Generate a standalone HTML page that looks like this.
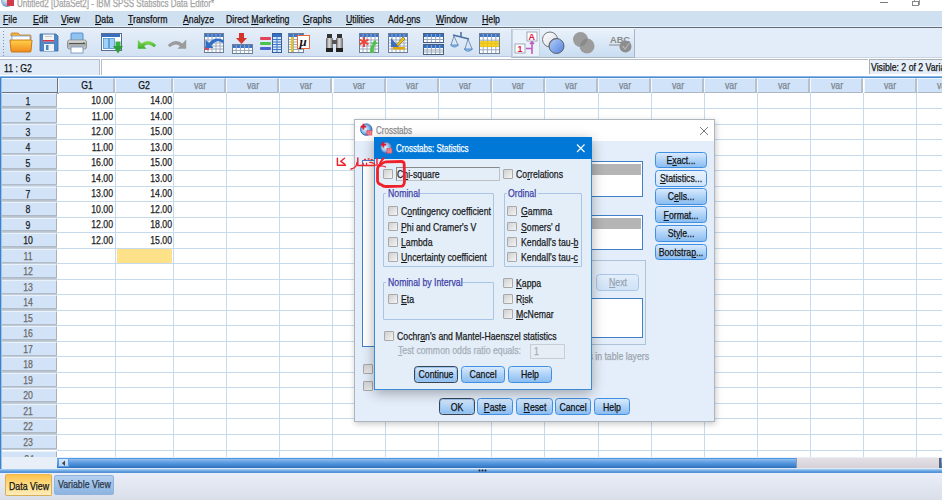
<!DOCTYPE html><html><head><meta charset="utf-8"><style>
*{margin:0;padding:0;box-sizing:border-box}
html,body{width:942px;height:500px;overflow:hidden;background:#fff;font-family:"Liberation Sans", sans-serif;font-size:11px;color:#1a1a1a}
.a{position:absolute}
.t{position:absolute;white-space:nowrap;line-height:1;-webkit-text-stroke:0.25px currentColor}
.u{text-decoration:underline;text-underline-offset:1px}
.btn{position:absolute;border:1px solid #3f8fe2;border-radius:3.5px;background:linear-gradient(#d9eafc,#b3d5f8 45%,#8bbdf1)}
.cb{position:absolute;width:9.8px;height:9.8px;margin:-0.8px 0 0 -0.8px;border:1px solid #a9a9a9;border-radius:1px;background:linear-gradient(135deg,#d0d0d0,#f4f4f4)}
.grp{position:absolute;border:1px solid #a9c4e4;border-radius:1px}
</style></head><body>

<div class="a" style="left:0;top:0;width:942px;height:11px;background:#fff"></div>
<div class="a" style="left:1px;top:-5px;width:12px;height:12px;border-radius:50%;background:radial-gradient(circle at 40% 40%,#e6f0fa,#3c6fb0)"></div>
<div class="a" style="left:7px;top:0px;width:7px;height:6px;background:#d23b4c"></div>
<div class="t" style="left:17.00px;top:-2.06px;font-size:10.5px;color:#a3a3a3;transform:scaleX(0.766);transform-origin:0 0;">Untitled2 [DataSet2] - IBM SPSS Statistics Data Editor*</div>
<div class="a" style="left:880px;top:2px;width:8px;height:1px;background:#7a7a7a"></div>
<div class="a" style="left:913.5px;top:-1px;width:6.5px;height:5.5px;border:1px solid #999"></div>
<div class="a" style="left:912px;top:0.5px;width:6.5px;height:5.5px;border:1px solid #888;background:#fff"></div>
<div class="a" style="left:0;top:11px;width:942px;height:16px;background:#cfe0f1"></div>
<div class="a" style="left:0;top:26px;width:942px;height:1px;background:#e6f2fb"></div>
<div class="a" style="left:0;top:27px;width:942px;height:1px;background:#5f6a76"></div>
<div class="t" style="left:3.30px;top:14.24px;font-size:10.5px;color:#111;transform:scaleX(0.83);transform-origin:0 0;"><span class="u">F</span>ile</div>
<div class="t" style="left:32.60px;top:14.24px;font-size:10.5px;color:#111;transform:scaleX(0.83);transform-origin:0 0;"><span class="u">E</span>dit</div>
<div class="t" style="left:61.00px;top:14.24px;font-size:10.5px;color:#111;transform:scaleX(0.83);transform-origin:0 0;"><span class="u">V</span>iew</div>
<div class="t" style="left:94.70px;top:14.24px;font-size:10.5px;color:#111;transform:scaleX(0.83);transform-origin:0 0;"><span class="u">D</span>ata</div>
<div class="t" style="left:128.00px;top:14.24px;font-size:10.5px;color:#111;transform:scaleX(0.83);transform-origin:0 0;"><span class="u">T</span>ransform</div>
<div class="t" style="left:182.70px;top:14.24px;font-size:10.5px;color:#111;transform:scaleX(0.83);transform-origin:0 0;"><span class="u">A</span>nalyze</div>
<div class="t" style="left:225.50px;top:14.24px;font-size:10.5px;color:#111;transform:scaleX(0.83);transform-origin:0 0;">Direct <span class="u">M</span>arketing</div>
<div class="t" style="left:302.50px;top:14.24px;font-size:10.5px;color:#111;transform:scaleX(0.83);transform-origin:0 0;"><span class="u">G</span>raphs</div>
<div class="t" style="left:345.80px;top:14.24px;font-size:10.5px;color:#111;transform:scaleX(0.83);transform-origin:0 0;"><span class="u">U</span>tilities</div>
<div class="t" style="left:388.40px;top:14.24px;font-size:10.5px;color:#111;transform:scaleX(0.83);transform-origin:0 0;">Add-<span class="u">o</span>ns</div>
<div class="t" style="left:436.00px;top:14.24px;font-size:10.5px;color:#111;transform:scaleX(0.83);transform-origin:0 0;"><span class="u">W</span>indow</div>
<div class="t" style="left:482.30px;top:14.24px;font-size:10.5px;color:#111;transform:scaleX(0.83);transform-origin:0 0;"><span class="u">H</span>elp</div>
<div class="a" style="left:0;top:28px;width:942px;height:29px;background:linear-gradient(#e6eff9,#d2e1f3)"></div>
<div class="a" style="left:0;top:28px;width:942px;height:1px;background:#f2f6fb"></div>
<div class="a" style="left:0;top:56px;width:511px;height:1px;background:#b7c9de"></div>
<div class="a" style="left:635px;top:28px;width:307px;height:30px;background:#e3edf9;border-bottom:1px solid #ccd6e1"></div>
<div class="a" style="left:511px;top:29px;width:124px;height:29px;border-left:1px solid #bac8d8;border-right:1px solid #a9b5c3;border-bottom:1px solid #a9b5c3;background:linear-gradient(#eaf2fb,#c9ddf2)"></div>
<div class="a" style="left:3px;top:31px;width:1px;height:1px;background:#7f8fa6"></div>
<div class="a" style="left:3px;top:34px;width:1px;height:1px;background:#7f8fa6"></div>
<div class="a" style="left:3px;top:37px;width:1px;height:1px;background:#7f8fa6"></div>
<div class="a" style="left:3px;top:40px;width:1px;height:1px;background:#7f8fa6"></div>
<div class="a" style="left:3px;top:43px;width:1px;height:1px;background:#7f8fa6"></div>
<div class="a" style="left:3px;top:46px;width:1px;height:1px;background:#7f8fa6"></div>
<div class="a" style="left:3px;top:49px;width:1px;height:1px;background:#7f8fa6"></div>
<div class="a" style="left:3px;top:52px;width:1px;height:1px;background:#7f8fa6"></div>
<div class="a" style="left:3px;top:55px;width:1px;height:1px;background:#7f8fa6"></div>
<svg class="a" style="left:9px;top:32px" width="24" height="21" viewBox="0 0 24 21">
<defs><linearGradient id="fo" x1="0" y1="0" x2="0" y2="1"><stop offset="0" stop-color="#ffd24a"/><stop offset="1" stop-color="#f08a1c"/></linearGradient></defs>
<path d="M2 4 L2 2 Q2 1 3 1 L9 1 L11 3 L21 3 Q22 3 22 4 L22 7 Z" fill="#f5b13a" stroke="#c97a20" stroke-width=".8"/>
<rect x="3" y="4" width="18" height="5" fill="#fff" stroke="#6aa0d8" stroke-width=".8"/>
<path d="M1 8 L23 8 L22 19 Q22 20 21 20 L3 20 Q2 20 2 19 Z" fill="url(#fo)" stroke="#c26f15" stroke-width=".9"/>
</svg>
<svg class="a" style="left:39px;top:33px" width="20" height="19" viewBox="0 0 20 19">
<path d="M1 1 L17 1 L19 3 L19 18 L1 18 Z" fill="#4f86c6" stroke="#3a6aa6" stroke-width=".8"/>
<rect x="4" y="1.5" width="11" height="7" fill="#f4f4f4"/>
<rect x="4" y="7" width="11" height="1.5" fill="#d8344a"/>
<line x1="6" y1="3.5" x2="13" y2="3.5" stroke="#bbb" stroke-width=".8"/>
<rect x="5" y="11" width="10" height="7" fill="#eef2f6"/>
<rect x="7" y="12" width="2.5" height="5" fill="#4f86c6"/>
</svg>
<svg class="a" style="left:66px;top:32px" width="22" height="22" viewBox="0 0 22 22">
<defs><linearGradient id="pg" x1="0" y1="0" x2="0" y2="1"><stop offset="0" stop-color="#e8e8e8"/><stop offset=".5" stop-color="#a9a9a9"/><stop offset="1" stop-color="#d0d0d0"/></linearGradient></defs>
<rect x="5" y="1" width="12" height="8" rx="1" fill="#8fc3f0" stroke="#3f7fc4" stroke-width=".8"/>
<rect x="1.5" y="8" width="19" height="9" rx="2" fill="url(#pg)" stroke="#808080" stroke-width=".8"/>
<line x1="3" y1="11.5" x2="19" y2="11.5" stroke="#555" stroke-width="1"/>
<rect x="17" y="10" width="1.5" height="1" fill="#4caf50"/>
<rect x="5" y="15" width="12" height="6" fill="#fff" stroke="#6a8fb8" stroke-width=".8"/>
</svg>
<svg class="a" style="left:100px;top:32px" width="23" height="22" viewBox="0 0 23 22">
<rect x="1.5" y="1.5" width="20" height="17" fill="#fff" stroke="#5a6d8e"/>
<rect x="2" y="2" width="18" height="3" fill="#3a6ec0"/>
<rect x="3.5" y="6.5" width="5" height="10" fill="#9fd0f5" stroke="#4a8fd0" stroke-width=".8"/>
<rect x="9.5" y="6.5" width="5" height="10" fill="#9fd0f5" stroke="#4a8fd0" stroke-width=".8"/>
<rect x="15.5" y="9.5" width="5" height="5" fill="#3cb043"/>
<path d="M13 14 L23 14 L18 21.5 Z" fill="#2ea03a"/>
</svg>
<svg class="a" style="left:137px;top:38px" width="20" height="12" viewBox="0 0 20 12">
<defs><linearGradient id="ug" x1="0" y1="0" x2="0" y2="1"><stop offset="0" stop-color="#8ee05a"/><stop offset="1" stop-color="#3cae2a"/></linearGradient></defs>
<path d="M0.8 1.5 L0.8 10.8 L9.5 10.8 Z" fill="url(#ug)"/>
<path d="M4 6 Q11 -0.5 19.2 7 L17.2 9.2 Q11 3.8 6.5 8.8 Z" fill="url(#ug)"/>
</svg>
<svg class="a" style="left:167px;top:38px" width="20" height="12" viewBox="0 0 20 12">
<path d="M19.2 1.5 L19.2 10.8 L10.5 10.8 Z" fill="#9b9b9b"/>
<path d="M16 6 Q9 -0.5 0.8 7 L2.8 9.2 Q9 3.8 13.5 8.8 Z" fill="#9b9b9b"/>
</svg>
<svg class="a" style="left:203px;top:32px" width="22" height="22" viewBox="0 0 22 22"><rect x="1.5" y="1.5" width="19" height="19" fill="#fff" stroke="#6d7f99"/><rect x="2" y="2" width="18" height="3" fill="#3b74c8"/><line x1="5.0" y1="2" x2="5.0" y2="20" stroke="#9aa9bb" stroke-width="1"/><line x1="9.0" y1="2" x2="9.0" y2="20" stroke="#9aa9bb" stroke-width="1"/><line x1="13.0" y1="2" x2="13.0" y2="20" stroke="#9aa9bb" stroke-width="1"/><line x1="17.0" y1="2" x2="17.0" y2="20" stroke="#9aa9bb" stroke-width="1"/><line x1="2" y1="8.0" x2="20" y2="8.0" stroke="#9aa9bb" stroke-width="1"/><line x1="2" y1="11.0" x2="20" y2="11.0" stroke="#9aa9bb" stroke-width="1"/><line x1="2" y1="14.0" x2="20" y2="14.0" stroke="#9aa9bb" stroke-width="1"/><line x1="2" y1="17.0" x2="20" y2="17.0" stroke="#9aa9bb" stroke-width="1"/>
<rect x="2" y="15" width="4" height="3" fill="#e0435a"/>
<path d="M2.5 7.5 L2.5 16 L10.5 16 Z" fill="#2f6fc7"/>
<path d="M5.5 11.5 Q12 3.5 21 8.5 L20 11 Q13 6.5 8.5 13.8 Z" fill="#2f6fc7"/>
</svg>
<svg class="a" style="left:231px;top:32px" width="23" height="22" viewBox="0 0 23 22"><rect x="1.5" y="12.5" width="20" height="9" fill="#fff" stroke="#6d7f99"/><rect x="2" y="13" width="19" height="3" fill="#3b74c8"/><line x1="5.2" y1="13" x2="5.2" y2="21" stroke="#9aa9bb" stroke-width="1"/><line x1="9.4" y1="13" x2="9.4" y2="21" stroke="#9aa9bb" stroke-width="1"/><line x1="13.6" y1="13" x2="13.6" y2="21" stroke="#9aa9bb" stroke-width="1"/><line x1="17.8" y1="13" x2="17.8" y2="21" stroke="#9aa9bb" stroke-width="1"/><line x1="2" y1="18.5" x2="21" y2="18.5" stroke="#9aa9bb" stroke-width="1"/>
<rect x="8" y="1" width="5" height="6" fill="#d3352a"/>
<path d="M5 6 L16 6 L10.5 12 Z" fill="#d3352a"/>
</svg>
<svg class="a" style="left:259px;top:32px" width="24" height="22" viewBox="0 0 24 22"><rect x="13.5" y="1.5" width="9" height="19" fill="#d6e8fb" stroke="#3a5f96"/><rect x="14" y="2" width="8" height="3" fill="#2f6fc7"/><line x1="18.0" y1="2" x2="18.0" y2="20" stroke="#3f78c8" stroke-width="1"/><line x1="14" y1="7.5" x2="22" y2="7.5" stroke="#3f78c8" stroke-width="1"/><line x1="14" y1="10.0" x2="22" y2="10.0" stroke="#3f78c8" stroke-width="1"/><line x1="14" y1="12.5" x2="22" y2="12.5" stroke="#3f78c8" stroke-width="1"/><line x1="14" y1="15.0" x2="22" y2="15.0" stroke="#3f78c8" stroke-width="1"/><line x1="14" y1="17.5" x2="22" y2="17.5" stroke="#3f78c8" stroke-width="1"/>
<rect x="1" y="5" width="11" height="3" rx="1" fill="#e0435a"/>
<rect x="1" y="10" width="11" height="3" rx="1" fill="#4cc24a"/>
<rect x="1" y="15" width="11" height="3" rx="1" fill="#4a63d0"/>
</svg>
<svg class="a" style="left:287px;top:32px" width="24" height="22" viewBox="0 0 24 22"><rect x="1.5" y="1.5" width="15" height="19" fill="#fff" stroke="#6d7f99"/><rect x="2" y="2" width="14" height="3" fill="#3b74c8"/><line x1="6.3" y1="2" x2="6.3" y2="20" stroke="#9aa9bb" stroke-width="1"/><line x1="11.7" y1="2" x2="11.7" y2="20" stroke="#9aa9bb" stroke-width="1"/><line x1="2" y1="7.5" x2="16" y2="7.5" stroke="#9aa9bb" stroke-width="1"/><line x1="2" y1="10.0" x2="16" y2="10.0" stroke="#9aa9bb" stroke-width="1"/><line x1="2" y1="12.5" x2="16" y2="12.5" stroke="#9aa9bb" stroke-width="1"/><line x1="2" y1="15.0" x2="16" y2="15.0" stroke="#9aa9bb" stroke-width="1"/><line x1="2" y1="17.5" x2="16" y2="17.5" stroke="#9aa9bb" stroke-width="1"/>
<rect x="4" y="5" width="2" height="15" fill="#f2c200"/>
<rect x="10.5" y="3.5" width="12" height="13" fill="#fff" stroke="#e9663a"/>
<text x="12.5" y="14" font-family="Liberation Serif" font-style="italic" font-size="13" font-weight="bold" fill="#111">μ</text>
</svg>
<svg class="a" style="left:325px;top:33px" width="19" height="20" viewBox="0 0 19 20">
<defs><linearGradient id="bn" x1="0" y1="0" x2="1" y2="0"><stop offset="0" stop-color="#5a5a5a"/><stop offset=".45" stop-color="#e0e0e0"/><stop offset="1" stop-color="#6a6a6a"/></linearGradient></defs>
<rect x="2" y="1" width="5" height="4" fill="#333"/><rect x="12" y="1" width="5" height="4" fill="#333"/>
<rect x="1" y="5" width="7" height="14" rx="1" fill="url(#bn)"/><rect x="11" y="5" width="7" height="14" rx="1" fill="url(#bn)"/>
<rect x="7" y="7" width="5" height="4" fill="#555"/>
<rect x="1" y="15" width="7" height="4" fill="#222"/><rect x="11" y="15" width="7" height="4" fill="#222"/>
</svg>
<svg class="a" style="left:358px;top:32px" width="22" height="22" viewBox="0 0 22 22"><rect x="1.5" y="1.5" width="19" height="19" fill="#fff" stroke="#6d7f99"/><rect x="2" y="2" width="18" height="3" fill="#3b74c8"/><line x1="5.0" y1="2" x2="5.0" y2="20" stroke="#9aa9bb" stroke-width="1"/><line x1="9.0" y1="2" x2="9.0" y2="20" stroke="#9aa9bb" stroke-width="1"/><line x1="13.0" y1="2" x2="13.0" y2="20" stroke="#9aa9bb" stroke-width="1"/><line x1="17.0" y1="2" x2="17.0" y2="20" stroke="#9aa9bb" stroke-width="1"/><line x1="2" y1="8.0" x2="20" y2="8.0" stroke="#9aa9bb" stroke-width="1"/><line x1="2" y1="11.0" x2="20" y2="11.0" stroke="#9aa9bb" stroke-width="1"/><line x1="2" y1="14.0" x2="20" y2="14.0" stroke="#9aa9bb" stroke-width="1"/><line x1="2" y1="17.0" x2="20" y2="17.0" stroke="#9aa9bb" stroke-width="1"/>
<path d="M6 5 L6 15 M1.5 7.5 L10.5 12.5 M10.5 7.5 L1.5 12.5" stroke="#f0433a" stroke-width="2"/>
<path d="M12 21 Q12 14 15 12 L13 12 L17 8 L20 12 L18 12 Q15 15 16 21 Z" fill="#4cc24a"/>
</svg>
<svg class="a" style="left:387px;top:32px" width="21" height="22" viewBox="0 0 21 22"><rect x="1.5" y="1.5" width="19" height="19" fill="#fff" stroke="#6d7f99"/><rect x="2" y="2" width="18" height="3" fill="#3b74c8"/><line x1="5.0" y1="2" x2="5.0" y2="20" stroke="#9aa9bb" stroke-width="1"/><line x1="9.0" y1="2" x2="9.0" y2="20" stroke="#9aa9bb" stroke-width="1"/><line x1="13.0" y1="2" x2="13.0" y2="20" stroke="#9aa9bb" stroke-width="1"/><line x1="17.0" y1="2" x2="17.0" y2="20" stroke="#9aa9bb" stroke-width="1"/><line x1="2" y1="8.0" x2="20" y2="8.0" stroke="#9aa9bb" stroke-width="1"/><line x1="2" y1="11.0" x2="20" y2="11.0" stroke="#9aa9bb" stroke-width="1"/><line x1="2" y1="14.0" x2="20" y2="14.0" stroke="#9aa9bb" stroke-width="1"/><line x1="2" y1="17.0" x2="20" y2="17.0" stroke="#9aa9bb" stroke-width="1"/>
<path d="M4 15 L4 6 L12 15 Z" fill="#3a6ec0"/>
<path d="M9 13 L16 5 L18 7 L11 14 Z" fill="#f2c200" stroke="#555" stroke-width=".5"/>
<rect x="6" y="15" width="12" height="2.5" fill="#e2a800"/>
</svg>
<svg class="a" style="left:422px;top:32px" width="23" height="23" viewBox="0 0 23 23"><rect x="1.5" y="1.5" width="20" height="9" fill="#fff" stroke="#4a5f80"/><rect x="2" y="2" width="19" height="3" fill="#2f6fc7"/><line x1="5.2" y1="2" x2="5.2" y2="10" stroke="#9aa9bb" stroke-width="1"/><line x1="9.4" y1="2" x2="9.4" y2="10" stroke="#9aa9bb" stroke-width="1"/><line x1="13.6" y1="2" x2="13.6" y2="10" stroke="#9aa9bb" stroke-width="1"/><line x1="17.8" y1="2" x2="17.8" y2="10" stroke="#9aa9bb" stroke-width="1"/><line x1="2" y1="7.5" x2="21" y2="7.5" stroke="#9aa9bb" stroke-width="1"/><rect x="1.5" y="12.5" width="20" height="10" fill="#fff" stroke="#4a5f80"/><rect x="2" y="13" width="19" height="3" fill="#2f6fc7"/><line x1="5.2" y1="13" x2="5.2" y2="22" stroke="#9aa9bb" stroke-width="1"/><line x1="9.4" y1="13" x2="9.4" y2="22" stroke="#9aa9bb" stroke-width="1"/><line x1="13.6" y1="13" x2="13.6" y2="22" stroke="#9aa9bb" stroke-width="1"/><line x1="17.8" y1="13" x2="17.8" y2="22" stroke="#9aa9bb" stroke-width="1"/><line x1="2" y1="18.0" x2="21" y2="18.0" stroke="#9aa9bb" stroke-width="1"/><line x1="2" y1="20.0" x2="21" y2="20.0" stroke="#9aa9bb" stroke-width="1"/></svg>
<svg class="a" style="left:450px;top:31px" width="23" height="23" viewBox="0 0 23 23">
<line x1="11" y1="1" x2="11" y2="6" stroke="#4a6fa0" stroke-width="1.5"/>
<line x1="3" y1="4" x2="19" y2="8" stroke="#4a6fa0" stroke-width="1.5"/>
<path d="M4 5 L1 14 M4 5 L8 14 M18 8 L15 18 M18 8 L22 18" stroke="#5d7fa8" stroke-width=".8" fill="none"/>
<path d="M0.5 14 Q4.5 18 8.5 14 Z" fill="#8fc3ea" stroke="#4a7fbf" stroke-width=".8"/>
<path d="M14 18 Q18 22.5 22.5 18 Z" fill="#8fc3ea" stroke="#4a7fbf" stroke-width=".8"/>
</svg>
<svg class="a" style="left:478px;top:32px" width="22" height="22" viewBox="0 0 22 22"><rect x="1.5" y="1.5" width="20" height="20" fill="#fff" stroke="#6d7f99"/><rect x="2" y="2" width="19" height="3" fill="#3b74c8"/><line x1="5.2" y1="2" x2="5.2" y2="21" stroke="#9aa9bb" stroke-width="1"/><line x1="9.4" y1="2" x2="9.4" y2="21" stroke="#9aa9bb" stroke-width="1"/><line x1="13.6" y1="2" x2="13.6" y2="21" stroke="#9aa9bb" stroke-width="1"/><line x1="17.8" y1="2" x2="17.8" y2="21" stroke="#9aa9bb" stroke-width="1"/><line x1="2" y1="8.2" x2="21" y2="8.2" stroke="#9aa9bb" stroke-width="1"/><line x1="2" y1="11.4" x2="21" y2="11.4" stroke="#9aa9bb" stroke-width="1"/><line x1="2" y1="14.6" x2="21" y2="14.6" stroke="#9aa9bb" stroke-width="1"/><line x1="2" y1="17.8" x2="21" y2="17.8" stroke="#9aa9bb" stroke-width="1"/>
<rect x="2" y="9" width="19" height="6" fill="#f5c800" opacity=".85"/>
</svg>
<svg class="a" style="left:512px;top:29px" width="28" height="28" viewBox="0 0 28 28">
<rect x="0.5" y="0.5" width="27" height="27" fill="#e9f1fb" stroke="#c5d3e3"/>
<rect x="15" y="3" width="10" height="9" fill="#fff" stroke="#8a97a8" stroke-width=".8"/>
<text x="16.5" y="11" font-family="Liberation Sans" font-weight="bold" font-size="9" fill="#e0194a">A</text>
<rect x="3" y="15" width="10" height="9" fill="#fff" stroke="#8a97a8" stroke-width=".8"/>
<text x="5.5" y="23" font-family="Liberation Sans" font-weight="bold" font-size="9" fill="#e0194a">1</text>
<path d="M14 19.5 L20 19.5 M20 13 L20 25 M18 15 L20 13 L22 15" stroke="#c35ac0" stroke-width="1.6" fill="none"/>
</svg>
<svg class="a" style="left:541px;top:31px" width="24" height="24" viewBox="0 0 24 24">
<defs><linearGradient id="cw" x1="0" y1="0" x2="1" y2="1"><stop offset="0" stop-color="#fff"/><stop offset="1" stop-color="#d5dbe5"/></linearGradient>
<linearGradient id="cb2" x1="0" y1="0" x2="1" y2="1"><stop offset="0" stop-color="#b9d2f7"/><stop offset="1" stop-color="#4f7fe0"/></linearGradient></defs>
<circle cx="9" cy="8.5" r="7.5" fill="url(#cw)" stroke="#666" stroke-width=".9"/>
<circle cx="15.5" cy="15" r="7.5" fill="url(#cb2)" stroke="#555" stroke-width=".9"/>
<path d="M8.2 15 A7.5 7.5 0 0 1 15.5 7.6" fill="none" stroke="#666" stroke-width=".9"/>
</svg>
<svg class="a" style="left:572px;top:31px" width="24" height="24" viewBox="0 0 24 24">
<circle cx="8.5" cy="8.5" r="7.5" fill="#9c9c9c"/>
<circle cx="15" cy="15" r="7.5" fill="#9c9c9c"/>
<path d="M8.2 15.5 A7.5 7.5 0 0 1 15.5 7.5 A7.5 7.5 0 0 1 8.2 15.5" fill="#8a8a8a"/>
</svg>
<svg class="a" style="left:608px;top:32px" width="26" height="22" viewBox="0 0 26 22">
<text x="2" y="11" font-family="Liberation Sans" font-weight="bold" font-size="9.5" fill="#8a8a8a" textLength="20" lengthAdjust="spacingAndGlyphs">ABC</text>
<line x1="1" y1="13" x2="15" y2="13" stroke="#8a8a8a" stroke-width="1"/>
<circle cx="17.5" cy="14.5" r="6" fill="#8d8d8d"/>
<path d="M14.5 14 L17 17 L21 11.5" stroke="#b5b5b5" stroke-width="1.2" fill="none"/>
</svg>
<div class="a" style="left:0;top:57px;width:511px;height:19px;background:#fff"></div>
<div class="a" style="left:511px;top:58px;width:124px;height:18px;background:#fff"></div>
<div class="a" style="left:635px;top:59px;width:307px;height:17px;background:#fff"></div>
<div class="a" style="left:0;top:59px;width:100px;height:16px;background:#e1ecf8;border-right:1px solid #b5bec8;border-top:1px solid #b5bec8"></div>
<div class="t" style="left:4.00px;top:62.54px;font-size:10.5px;color:#111;transform:scaleX(0.83);transform-origin:0 0;">11 : G2</div>
<div class="a" style="left:101px;top:59px;width:767px;height:16px;background:#fff;border-left:1px solid #b5bec8;border-top:1px solid #b5bec8"></div>
<div class="a" style="left:869px;top:59.3px;width:80px;height:15px;background:#e6eff9;border-left:1px solid #a9b0b8;border-top:1px solid #a9b0b8"></div>
<div class="t" style="left:871.30px;top:62.34px;font-size:10.5px;color:#111;transform:scaleX(0.83);transform-origin:0 0;">Visible: 2 of 2 Variables</div>
<div class="a" style="left:0;top:76px;width:942px;height:1px;background:#8cb9e6"></div>
<div class="a" style="left:0;top:77px;width:942px;height:1px;background:#4a8ad0"></div>
<div class="a" style="left:0;top:78px;width:1px;height:392px;background:#3f82cc"></div>
<div class="a" style="left:1px;top:78px;width:1px;height:392px;background:#9cc3ea"></div>
<div class="a" style="left:114.5px;top:93px;width:1px;height:364px;background:#c6daee"></div>
<div class="a" style="left:172.7px;top:93px;width:1px;height:364px;background:#c6daee"></div>
<div class="a" style="left:225.8px;top:93px;width:1px;height:364px;background:#c6daee"></div>
<div class="a" style="left:278.9px;top:93px;width:1px;height:364px;background:#c6daee"></div>
<div class="a" style="left:332.0px;top:93px;width:1px;height:364px;background:#c6daee"></div>
<div class="a" style="left:385.1px;top:93px;width:1px;height:364px;background:#c6daee"></div>
<div class="a" style="left:438.2px;top:93px;width:1px;height:364px;background:#c6daee"></div>
<div class="a" style="left:491.3px;top:93px;width:1px;height:364px;background:#c6daee"></div>
<div class="a" style="left:544.4px;top:93px;width:1px;height:364px;background:#c6daee"></div>
<div class="a" style="left:597.5px;top:93px;width:1px;height:364px;background:#c6daee"></div>
<div class="a" style="left:650.6px;top:93px;width:1px;height:364px;background:#c6daee"></div>
<div class="a" style="left:703.7px;top:93px;width:1px;height:364px;background:#c6daee"></div>
<div class="a" style="left:756.8px;top:93px;width:1px;height:364px;background:#c6daee"></div>
<div class="a" style="left:809.9px;top:93px;width:1px;height:364px;background:#c6daee"></div>
<div class="a" style="left:863.0px;top:93px;width:1px;height:364px;background:#c6daee"></div>
<div class="a" style="left:916.1px;top:93px;width:1px;height:364px;background:#c6daee"></div>
<div class="a" style="left:57px;top:108.0px;width:885px;height:1px;background:#c6daee"></div>
<div class="a" style="left:57px;top:123.5px;width:885px;height:1px;background:#c6daee"></div>
<div class="a" style="left:57px;top:139.1px;width:885px;height:1px;background:#c6daee"></div>
<div class="a" style="left:57px;top:154.6px;width:885px;height:1px;background:#c6daee"></div>
<div class="a" style="left:57px;top:170.1px;width:885px;height:1px;background:#c6daee"></div>
<div class="a" style="left:57px;top:185.6px;width:885px;height:1px;background:#c6daee"></div>
<div class="a" style="left:57px;top:201.1px;width:885px;height:1px;background:#c6daee"></div>
<div class="a" style="left:57px;top:216.7px;width:885px;height:1px;background:#c6daee"></div>
<div class="a" style="left:57px;top:232.2px;width:885px;height:1px;background:#c6daee"></div>
<div class="a" style="left:57px;top:247.7px;width:885px;height:1px;background:#c6daee"></div>
<div class="a" style="left:57px;top:263.2px;width:885px;height:1px;background:#c6daee"></div>
<div class="a" style="left:57px;top:278.7px;width:885px;height:1px;background:#c6daee"></div>
<div class="a" style="left:57px;top:294.3px;width:885px;height:1px;background:#c6daee"></div>
<div class="a" style="left:57px;top:309.8px;width:885px;height:1px;background:#c6daee"></div>
<div class="a" style="left:57px;top:325.3px;width:885px;height:1px;background:#c6daee"></div>
<div class="a" style="left:57px;top:340.8px;width:885px;height:1px;background:#c6daee"></div>
<div class="a" style="left:57px;top:356.3px;width:885px;height:1px;background:#c6daee"></div>
<div class="a" style="left:57px;top:371.9px;width:885px;height:1px;background:#c6daee"></div>
<div class="a" style="left:57px;top:387.4px;width:885px;height:1px;background:#c6daee"></div>
<div class="a" style="left:57px;top:402.9px;width:885px;height:1px;background:#c6daee"></div>
<div class="a" style="left:57px;top:418.4px;width:885px;height:1px;background:#c6daee"></div>
<div class="a" style="left:57px;top:433.9px;width:885px;height:1px;background:#c6daee"></div>
<div class="a" style="left:57px;top:449.5px;width:885px;height:1px;background:#c6daee"></div>
<div class="a" style="left:2px;top:78px;width:56px;height:16px;background:#d0e3f8;border-top:1px solid #eef5fc"></div>
<div class="a" style="left:2px;top:92px;width:56px;height:1px;background:#6b737c"></div>
<div class="a" style="left:2px;top:93px;width:56px;height:1px;background:#aab3bd"></div>
<div class="a" style="left:57px;top:78px;width:1px;height:15px;background:#6b737c"></div>
<div class="a" style="left:58px;top:78px;width:1px;height:16px;background:#aab3bd"></div>
<div class="a" style="left:58.0px;top:78px;width:57.0px;height:15px;background:#d0e3f8;border-top:1px solid #eef5fc;border-left:1px solid #f4f8fc;border-right:2px solid #b7c0ca;border-bottom:1px solid #aeb7c1"></div>
<div class="t" style="left:56.50px;width:60px;text-align:center;top:80.14px;font-size:10.5px;color:#111;transform:scaleX(0.83);transform-origin:50% 0;">G1</div>
<div class="a" style="left:115.0px;top:78px;width:58.2px;height:15px;background:#d0e3f8;border-top:1px solid #eef5fc;border-left:1px solid #f4f8fc;border-right:2px solid #b7c0ca;border-bottom:1px solid #aeb7c1"></div>
<div class="t" style="left:114.10px;width:60px;text-align:center;top:80.14px;font-size:10.5px;color:#111;transform:scaleX(0.83);transform-origin:50% 0;">G2</div>
<div class="a" style="left:173.2px;top:78px;width:53.1px;height:15px;background:#d0e3f8;border-top:1px solid #eef5fc;border-left:1px solid #f4f8fc;border-right:2px solid #b7c0ca;border-bottom:1px solid #aeb7c1"></div>
<div class="t" style="left:169.75px;width:60px;text-align:center;top:80.14px;font-size:10.5px;color:#7b8591;transform:scaleX(0.83);transform-origin:50% 0;">var</div>
<div class="a" style="left:226.3px;top:78px;width:53.1px;height:15px;background:#d0e3f8;border-top:1px solid #eef5fc;border-left:1px solid #f4f8fc;border-right:2px solid #b7c0ca;border-bottom:1px solid #aeb7c1"></div>
<div class="t" style="left:222.85px;width:60px;text-align:center;top:80.14px;font-size:10.5px;color:#7b8591;transform:scaleX(0.83);transform-origin:50% 0;">var</div>
<div class="a" style="left:279.4px;top:78px;width:53.1px;height:15px;background:#d0e3f8;border-top:1px solid #eef5fc;border-left:1px solid #f4f8fc;border-right:2px solid #b7c0ca;border-bottom:1px solid #aeb7c1"></div>
<div class="t" style="left:275.95px;width:60px;text-align:center;top:80.14px;font-size:10.5px;color:#7b8591;transform:scaleX(0.83);transform-origin:50% 0;">var</div>
<div class="a" style="left:332.5px;top:78px;width:53.1px;height:15px;background:#d0e3f8;border-top:1px solid #eef5fc;border-left:1px solid #f4f8fc;border-right:2px solid #b7c0ca;border-bottom:1px solid #aeb7c1"></div>
<div class="t" style="left:329.05px;width:60px;text-align:center;top:80.14px;font-size:10.5px;color:#7b8591;transform:scaleX(0.83);transform-origin:50% 0;">var</div>
<div class="a" style="left:385.6px;top:78px;width:53.1px;height:15px;background:#d0e3f8;border-top:1px solid #eef5fc;border-left:1px solid #f4f8fc;border-right:2px solid #b7c0ca;border-bottom:1px solid #aeb7c1"></div>
<div class="t" style="left:382.15px;width:60px;text-align:center;top:80.14px;font-size:10.5px;color:#7b8591;transform:scaleX(0.83);transform-origin:50% 0;">var</div>
<div class="a" style="left:438.7px;top:78px;width:53.1px;height:15px;background:#d0e3f8;border-top:1px solid #eef5fc;border-left:1px solid #f4f8fc;border-right:2px solid #b7c0ca;border-bottom:1px solid #aeb7c1"></div>
<div class="t" style="left:435.25px;width:60px;text-align:center;top:80.14px;font-size:10.5px;color:#7b8591;transform:scaleX(0.83);transform-origin:50% 0;">var</div>
<div class="a" style="left:491.8px;top:78px;width:53.1px;height:15px;background:#d0e3f8;border-top:1px solid #eef5fc;border-left:1px solid #f4f8fc;border-right:2px solid #b7c0ca;border-bottom:1px solid #aeb7c1"></div>
<div class="t" style="left:488.35px;width:60px;text-align:center;top:80.14px;font-size:10.5px;color:#7b8591;transform:scaleX(0.83);transform-origin:50% 0;">var</div>
<div class="a" style="left:544.9px;top:78px;width:53.1px;height:15px;background:#d0e3f8;border-top:1px solid #eef5fc;border-left:1px solid #f4f8fc;border-right:2px solid #b7c0ca;border-bottom:1px solid #aeb7c1"></div>
<div class="t" style="left:541.45px;width:60px;text-align:center;top:80.14px;font-size:10.5px;color:#7b8591;transform:scaleX(0.83);transform-origin:50% 0;">var</div>
<div class="a" style="left:598.0px;top:78px;width:53.1px;height:15px;background:#d0e3f8;border-top:1px solid #eef5fc;border-left:1px solid #f4f8fc;border-right:2px solid #b7c0ca;border-bottom:1px solid #aeb7c1"></div>
<div class="t" style="left:594.55px;width:60px;text-align:center;top:80.14px;font-size:10.5px;color:#7b8591;transform:scaleX(0.83);transform-origin:50% 0;">var</div>
<div class="a" style="left:651.1px;top:78px;width:53.1px;height:15px;background:#d0e3f8;border-top:1px solid #eef5fc;border-left:1px solid #f4f8fc;border-right:2px solid #b7c0ca;border-bottom:1px solid #aeb7c1"></div>
<div class="t" style="left:647.65px;width:60px;text-align:center;top:80.14px;font-size:10.5px;color:#7b8591;transform:scaleX(0.83);transform-origin:50% 0;">var</div>
<div class="a" style="left:704.2px;top:78px;width:53.1px;height:15px;background:#d0e3f8;border-top:1px solid #eef5fc;border-left:1px solid #f4f8fc;border-right:2px solid #b7c0ca;border-bottom:1px solid #aeb7c1"></div>
<div class="t" style="left:700.75px;width:60px;text-align:center;top:80.14px;font-size:10.5px;color:#7b8591;transform:scaleX(0.83);transform-origin:50% 0;">var</div>
<div class="a" style="left:757.3px;top:78px;width:53.1px;height:15px;background:#d0e3f8;border-top:1px solid #eef5fc;border-left:1px solid #f4f8fc;border-right:2px solid #b7c0ca;border-bottom:1px solid #aeb7c1"></div>
<div class="t" style="left:753.85px;width:60px;text-align:center;top:80.14px;font-size:10.5px;color:#7b8591;transform:scaleX(0.83);transform-origin:50% 0;">var</div>
<div class="a" style="left:810.4px;top:78px;width:53.1px;height:15px;background:#d0e3f8;border-top:1px solid #eef5fc;border-left:1px solid #f4f8fc;border-right:2px solid #b7c0ca;border-bottom:1px solid #aeb7c1"></div>
<div class="t" style="left:806.95px;width:60px;text-align:center;top:80.14px;font-size:10.5px;color:#7b8591;transform:scaleX(0.83);transform-origin:50% 0;">var</div>
<div class="a" style="left:863.5px;top:78px;width:53.1px;height:15px;background:#d0e3f8;border-top:1px solid #eef5fc;border-left:1px solid #f4f8fc;border-right:2px solid #b7c0ca;border-bottom:1px solid #aeb7c1"></div>
<div class="t" style="left:860.05px;width:60px;text-align:center;top:80.14px;font-size:10.5px;color:#7b8591;transform:scaleX(0.83);transform-origin:50% 0;">var</div>
<div class="a" style="left:916.6px;top:78px;width:53.1px;height:15px;background:#d0e3f8;border-top:1px solid #eef5fc;border-left:1px solid #f4f8fc;border-right:2px solid #b7c0ca;border-bottom:1px solid #aeb7c1"></div>
<div class="t" style="left:913.15px;width:60px;text-align:center;top:80.14px;font-size:10.5px;color:#7b8591;transform:scaleX(0.83);transform-origin:50% 0;">var</div>
<div class="a" style="left:2px;top:93.40px;width:55px;height:15.52px;background:#d2e3f7;border-top:1px solid #eaf2fb;border-right:1px solid #a8b1bb"></div>
<div class="a" style="left:2px;top:106.30px;width:55px;height:2.6px;background:linear-gradient(#a9b4c0,#c9d3de)"></div>
<div class="t" style="left:7.60px;width:40px;text-align:center;top:95.54px;font-size:10.5px;color:#1a1a1a;transform:scaleX(0.83);transform-origin:50% 0;">1</div>
<div class="a" style="left:2px;top:108.92px;width:55px;height:15.52px;background:#d2e3f7;border-top:1px solid #eaf2fb;border-right:1px solid #a8b1bb"></div>
<div class="a" style="left:2px;top:121.82px;width:55px;height:2.6px;background:linear-gradient(#a9b4c0,#c9d3de)"></div>
<div class="t" style="left:7.60px;width:40px;text-align:center;top:111.06px;font-size:10.5px;color:#1a1a1a;transform:scaleX(0.83);transform-origin:50% 0;">2</div>
<div class="a" style="left:2px;top:124.44px;width:55px;height:15.52px;background:#d2e3f7;border-top:1px solid #eaf2fb;border-right:1px solid #a8b1bb"></div>
<div class="a" style="left:2px;top:137.34px;width:55px;height:2.6px;background:linear-gradient(#a9b4c0,#c9d3de)"></div>
<div class="t" style="left:7.60px;width:40px;text-align:center;top:126.58px;font-size:10.5px;color:#1a1a1a;transform:scaleX(0.83);transform-origin:50% 0;">3</div>
<div class="a" style="left:2px;top:139.96px;width:55px;height:15.52px;background:#d2e3f7;border-top:1px solid #eaf2fb;border-right:1px solid #a8b1bb"></div>
<div class="a" style="left:2px;top:152.86px;width:55px;height:2.6px;background:linear-gradient(#a9b4c0,#c9d3de)"></div>
<div class="t" style="left:7.60px;width:40px;text-align:center;top:142.10px;font-size:10.5px;color:#1a1a1a;transform:scaleX(0.83);transform-origin:50% 0;">4</div>
<div class="a" style="left:2px;top:155.48px;width:55px;height:15.52px;background:#d2e3f7;border-top:1px solid #eaf2fb;border-right:1px solid #a8b1bb"></div>
<div class="a" style="left:2px;top:168.38px;width:55px;height:2.6px;background:linear-gradient(#a9b4c0,#c9d3de)"></div>
<div class="t" style="left:7.60px;width:40px;text-align:center;top:157.62px;font-size:10.5px;color:#1a1a1a;transform:scaleX(0.83);transform-origin:50% 0;">5</div>
<div class="a" style="left:2px;top:171.00px;width:55px;height:15.52px;background:#d2e3f7;border-top:1px solid #eaf2fb;border-right:1px solid #a8b1bb"></div>
<div class="a" style="left:2px;top:183.90px;width:55px;height:2.6px;background:linear-gradient(#a9b4c0,#c9d3de)"></div>
<div class="t" style="left:7.60px;width:40px;text-align:center;top:173.14px;font-size:10.5px;color:#1a1a1a;transform:scaleX(0.83);transform-origin:50% 0;">6</div>
<div class="a" style="left:2px;top:186.52px;width:55px;height:15.52px;background:#d2e3f7;border-top:1px solid #eaf2fb;border-right:1px solid #a8b1bb"></div>
<div class="a" style="left:2px;top:199.42px;width:55px;height:2.6px;background:linear-gradient(#a9b4c0,#c9d3de)"></div>
<div class="t" style="left:7.60px;width:40px;text-align:center;top:188.66px;font-size:10.5px;color:#1a1a1a;transform:scaleX(0.83);transform-origin:50% 0;">7</div>
<div class="a" style="left:2px;top:202.04px;width:55px;height:15.52px;background:#d2e3f7;border-top:1px solid #eaf2fb;border-right:1px solid #a8b1bb"></div>
<div class="a" style="left:2px;top:214.94px;width:55px;height:2.6px;background:linear-gradient(#a9b4c0,#c9d3de)"></div>
<div class="t" style="left:7.60px;width:40px;text-align:center;top:204.18px;font-size:10.5px;color:#1a1a1a;transform:scaleX(0.83);transform-origin:50% 0;">8</div>
<div class="a" style="left:2px;top:217.56px;width:55px;height:15.52px;background:#d2e3f7;border-top:1px solid #eaf2fb;border-right:1px solid #a8b1bb"></div>
<div class="a" style="left:2px;top:230.46px;width:55px;height:2.6px;background:linear-gradient(#a9b4c0,#c9d3de)"></div>
<div class="t" style="left:7.60px;width:40px;text-align:center;top:219.70px;font-size:10.5px;color:#1a1a1a;transform:scaleX(0.83);transform-origin:50% 0;">9</div>
<div class="a" style="left:2px;top:233.08px;width:55px;height:15.52px;background:#d2e3f7;border-top:1px solid #eaf2fb;border-right:1px solid #a8b1bb"></div>
<div class="a" style="left:2px;top:245.98px;width:55px;height:2.6px;background:linear-gradient(#a9b4c0,#c9d3de)"></div>
<div class="t" style="left:7.60px;width:40px;text-align:center;top:235.22px;font-size:10.5px;color:#1a1a1a;transform:scaleX(0.83);transform-origin:50% 0;">10</div>
<div class="a" style="left:2px;top:248.60px;width:55px;height:15.52px;background:#d2e3f7;border-top:1px solid #eaf2fb;border-right:1px solid #a8b1bb"></div>
<div class="a" style="left:2px;top:261.50px;width:55px;height:2.6px;background:linear-gradient(#a9b4c0,#c9d3de)"></div>
<div class="t" style="left:7.60px;width:40px;text-align:center;top:250.74px;font-size:10.5px;color:#6a6a6a;transform:scaleX(0.83);transform-origin:50% 0;">11</div>
<div class="a" style="left:2px;top:264.12px;width:55px;height:15.52px;background:#d2e3f7;border-top:1px solid #eaf2fb;border-right:1px solid #a8b1bb"></div>
<div class="a" style="left:2px;top:277.02px;width:55px;height:2.6px;background:linear-gradient(#a9b4c0,#c9d3de)"></div>
<div class="t" style="left:7.60px;width:40px;text-align:center;top:266.26px;font-size:10.5px;color:#6a6a6a;transform:scaleX(0.83);transform-origin:50% 0;">12</div>
<div class="a" style="left:2px;top:279.64px;width:55px;height:15.52px;background:#d2e3f7;border-top:1px solid #eaf2fb;border-right:1px solid #a8b1bb"></div>
<div class="a" style="left:2px;top:292.54px;width:55px;height:2.6px;background:linear-gradient(#a9b4c0,#c9d3de)"></div>
<div class="t" style="left:7.60px;width:40px;text-align:center;top:281.78px;font-size:10.5px;color:#6a6a6a;transform:scaleX(0.83);transform-origin:50% 0;">13</div>
<div class="a" style="left:2px;top:295.16px;width:55px;height:15.52px;background:#d2e3f7;border-top:1px solid #eaf2fb;border-right:1px solid #a8b1bb"></div>
<div class="a" style="left:2px;top:308.06px;width:55px;height:2.6px;background:linear-gradient(#a9b4c0,#c9d3de)"></div>
<div class="t" style="left:7.60px;width:40px;text-align:center;top:297.30px;font-size:10.5px;color:#6a6a6a;transform:scaleX(0.83);transform-origin:50% 0;">14</div>
<div class="a" style="left:2px;top:310.68px;width:55px;height:15.52px;background:#d2e3f7;border-top:1px solid #eaf2fb;border-right:1px solid #a8b1bb"></div>
<div class="a" style="left:2px;top:323.58px;width:55px;height:2.6px;background:linear-gradient(#a9b4c0,#c9d3de)"></div>
<div class="t" style="left:7.60px;width:40px;text-align:center;top:312.82px;font-size:10.5px;color:#6a6a6a;transform:scaleX(0.83);transform-origin:50% 0;">15</div>
<div class="a" style="left:2px;top:326.20px;width:55px;height:15.52px;background:#d2e3f7;border-top:1px solid #eaf2fb;border-right:1px solid #a8b1bb"></div>
<div class="a" style="left:2px;top:339.10px;width:55px;height:2.6px;background:linear-gradient(#a9b4c0,#c9d3de)"></div>
<div class="t" style="left:7.60px;width:40px;text-align:center;top:328.34px;font-size:10.5px;color:#6a6a6a;transform:scaleX(0.83);transform-origin:50% 0;">16</div>
<div class="a" style="left:2px;top:341.72px;width:55px;height:15.52px;background:#d2e3f7;border-top:1px solid #eaf2fb;border-right:1px solid #a8b1bb"></div>
<div class="a" style="left:2px;top:354.62px;width:55px;height:2.6px;background:linear-gradient(#a9b4c0,#c9d3de)"></div>
<div class="t" style="left:7.60px;width:40px;text-align:center;top:343.86px;font-size:10.5px;color:#6a6a6a;transform:scaleX(0.83);transform-origin:50% 0;">17</div>
<div class="a" style="left:2px;top:357.24px;width:55px;height:15.52px;background:#d2e3f7;border-top:1px solid #eaf2fb;border-right:1px solid #a8b1bb"></div>
<div class="a" style="left:2px;top:370.14px;width:55px;height:2.6px;background:linear-gradient(#a9b4c0,#c9d3de)"></div>
<div class="t" style="left:7.60px;width:40px;text-align:center;top:359.38px;font-size:10.5px;color:#6a6a6a;transform:scaleX(0.83);transform-origin:50% 0;">18</div>
<div class="a" style="left:2px;top:372.76px;width:55px;height:15.52px;background:#d2e3f7;border-top:1px solid #eaf2fb;border-right:1px solid #a8b1bb"></div>
<div class="a" style="left:2px;top:385.66px;width:55px;height:2.6px;background:linear-gradient(#a9b4c0,#c9d3de)"></div>
<div class="t" style="left:7.60px;width:40px;text-align:center;top:374.90px;font-size:10.5px;color:#6a6a6a;transform:scaleX(0.83);transform-origin:50% 0;">19</div>
<div class="a" style="left:2px;top:388.28px;width:55px;height:15.52px;background:#d2e3f7;border-top:1px solid #eaf2fb;border-right:1px solid #a8b1bb"></div>
<div class="a" style="left:2px;top:401.18px;width:55px;height:2.6px;background:linear-gradient(#a9b4c0,#c9d3de)"></div>
<div class="t" style="left:7.60px;width:40px;text-align:center;top:390.42px;font-size:10.5px;color:#6a6a6a;transform:scaleX(0.83);transform-origin:50% 0;">20</div>
<div class="a" style="left:2px;top:403.80px;width:55px;height:15.52px;background:#d2e3f7;border-top:1px solid #eaf2fb;border-right:1px solid #a8b1bb"></div>
<div class="a" style="left:2px;top:416.70px;width:55px;height:2.6px;background:linear-gradient(#a9b4c0,#c9d3de)"></div>
<div class="t" style="left:7.60px;width:40px;text-align:center;top:405.94px;font-size:10.5px;color:#6a6a6a;transform:scaleX(0.83);transform-origin:50% 0;">21</div>
<div class="a" style="left:2px;top:419.32px;width:55px;height:15.52px;background:#d2e3f7;border-top:1px solid #eaf2fb;border-right:1px solid #a8b1bb"></div>
<div class="a" style="left:2px;top:432.22px;width:55px;height:2.6px;background:linear-gradient(#a9b4c0,#c9d3de)"></div>
<div class="t" style="left:7.60px;width:40px;text-align:center;top:421.46px;font-size:10.5px;color:#6a6a6a;transform:scaleX(0.83);transform-origin:50% 0;">22</div>
<div class="a" style="left:2px;top:434.84px;width:55px;height:15.52px;background:#d2e3f7;border-top:1px solid #eaf2fb;border-right:1px solid #a8b1bb"></div>
<div class="a" style="left:2px;top:447.74px;width:55px;height:2.6px;background:linear-gradient(#a9b4c0,#c9d3de)"></div>
<div class="t" style="left:7.60px;width:40px;text-align:center;top:436.98px;font-size:10.5px;color:#6a6a6a;transform:scaleX(0.83);transform-origin:50% 0;">23</div>
<div class="a" style="left:2px;top:451.0px;width:55px;height:6.0px;overflow:hidden;background:#d2e3f7;border-top:1px solid #eaf2fb;border-right:1px solid #a8b1bb"><div class="t" style="left:0;width:54px;text-align:center;top:1.5px;font-size:10.5px;color:#6a6a6a;transform:scaleX(0.83)">24</div></div>
<div class="t" style="left:63.40px;width:50px;text-align:right;top:95.04px;font-size:10.5px;color:#1a1a1a;transform:scaleX(0.83);transform-origin:100% 0;">10.00</div>
<div class="t" style="left:121.50px;width:50px;text-align:right;top:95.04px;font-size:10.5px;color:#1a1a1a;transform:scaleX(0.83);transform-origin:100% 0;">14.00</div>
<div class="t" style="left:63.40px;width:50px;text-align:right;top:110.56px;font-size:10.5px;color:#1a1a1a;transform:scaleX(0.83);transform-origin:100% 0;">11.00</div>
<div class="t" style="left:121.50px;width:50px;text-align:right;top:110.56px;font-size:10.5px;color:#1a1a1a;transform:scaleX(0.83);transform-origin:100% 0;">14.00</div>
<div class="t" style="left:63.40px;width:50px;text-align:right;top:126.08px;font-size:10.5px;color:#1a1a1a;transform:scaleX(0.83);transform-origin:100% 0;">12.00</div>
<div class="t" style="left:121.50px;width:50px;text-align:right;top:126.08px;font-size:10.5px;color:#1a1a1a;transform:scaleX(0.83);transform-origin:100% 0;">15.00</div>
<div class="t" style="left:63.40px;width:50px;text-align:right;top:141.60px;font-size:10.5px;color:#1a1a1a;transform:scaleX(0.83);transform-origin:100% 0;">11.00</div>
<div class="t" style="left:121.50px;width:50px;text-align:right;top:141.60px;font-size:10.5px;color:#1a1a1a;transform:scaleX(0.83);transform-origin:100% 0;">13.00</div>
<div class="t" style="left:63.40px;width:50px;text-align:right;top:157.12px;font-size:10.5px;color:#1a1a1a;transform:scaleX(0.83);transform-origin:100% 0;">16.00</div>
<div class="t" style="left:121.50px;width:50px;text-align:right;top:157.12px;font-size:10.5px;color:#1a1a1a;transform:scaleX(0.83);transform-origin:100% 0;">15.00</div>
<div class="t" style="left:63.40px;width:50px;text-align:right;top:172.64px;font-size:10.5px;color:#1a1a1a;transform:scaleX(0.83);transform-origin:100% 0;">14.00</div>
<div class="t" style="left:121.50px;width:50px;text-align:right;top:172.64px;font-size:10.5px;color:#1a1a1a;transform:scaleX(0.83);transform-origin:100% 0;">13.00</div>
<div class="t" style="left:63.40px;width:50px;text-align:right;top:188.16px;font-size:10.5px;color:#1a1a1a;transform:scaleX(0.83);transform-origin:100% 0;">13.00</div>
<div class="t" style="left:121.50px;width:50px;text-align:right;top:188.16px;font-size:10.5px;color:#1a1a1a;transform:scaleX(0.83);transform-origin:100% 0;">14.00</div>
<div class="t" style="left:63.40px;width:50px;text-align:right;top:203.68px;font-size:10.5px;color:#1a1a1a;transform:scaleX(0.83);transform-origin:100% 0;">10.00</div>
<div class="t" style="left:121.50px;width:50px;text-align:right;top:203.68px;font-size:10.5px;color:#1a1a1a;transform:scaleX(0.83);transform-origin:100% 0;">12.00</div>
<div class="t" style="left:63.40px;width:50px;text-align:right;top:219.20px;font-size:10.5px;color:#1a1a1a;transform:scaleX(0.83);transform-origin:100% 0;">12.00</div>
<div class="t" style="left:121.50px;width:50px;text-align:right;top:219.20px;font-size:10.5px;color:#1a1a1a;transform:scaleX(0.83);transform-origin:100% 0;">18.00</div>
<div class="t" style="left:63.40px;width:50px;text-align:right;top:234.72px;font-size:10.5px;color:#1a1a1a;transform:scaleX(0.83);transform-origin:100% 0;">12.00</div>
<div class="t" style="left:121.50px;width:50px;text-align:right;top:234.72px;font-size:10.5px;color:#1a1a1a;transform:scaleX(0.83);transform-origin:100% 0;">15.00</div>
<div class="a" style="left:116.5px;top:249.2px;width:55.5px;height:13.7px;background:#fde28a"></div>
<div class="a" style="left:2px;top:457px;width:940px;height:12px;background:#e8eff8"></div>
<div class="a" style="left:57px;top:457.5px;width:885px;height:10px;background:linear-gradient(#8fbdec,#5b9be0 40%,#3f84d0 75%,#2f6db8);border-top:1px solid #4f9ae8"></div>
<div class="a" style="left:57px;top:467.5px;width:885px;height:1.5px;background:#dde8f5"></div>
<div class="a" style="left:58px;top:458.3px;width:10.5px;height:9px;background:linear-gradient(#d6e8fb,#b4d3f3);border:1px solid #5a9ee8"></div>
<svg class="a" style="left:60px;top:459px" width="7" height="8"><path d="M5 1.5 L2 4.2 L5 7 Z" fill="#444"/></svg>
<div class="a" style="left:796px;top:458px;width:145px;height:9.5px;background:linear-gradient(#e4e0e6,#d6d1d9);border-left:1px solid #8a9ab0;border-right:2px solid #5a6470"></div>
<div class="a" style="left:0;top:469px;width:942px;height:4.5px;background:linear-gradient(#a9d2f6,#6aa6e2 40%,#4a8ad3 65%,#9cc6ee)"></div>
<svg class="a" style="left:478px;top:469px" width="10" height="3"><circle cx="1.5" cy="1.5" r="1" fill="#223"/><circle cx="4.5" cy="1.5" r="1" fill="#223"/><circle cx="7.5" cy="1.5" r="1" fill="#223"/></svg>
<div class="a" style="left:0;top:473px;width:942px;height:27px;background:linear-gradient(#e9eef8,#d9dee8)"></div>
<div class="a" style="left:5px;top:473.5px;width:47px;height:22.5px;border:1px solid #d8ae5a;border-top-color:#f0b840;border-radius:2px;background:linear-gradient(#fdc24e,#ffdf8c 55%,#ffecb8)"></div>
<div class="t" style="left:9.00px;top:480.54px;font-size:10.5px;color:#111;transform:scaleX(0.84);transform-origin:0 0;">Data View</div>
<div class="a" style="left:54px;top:474.5px;width:60px;height:20.5px;border:1px solid #8fb3dc;border-radius:2px;background:linear-gradient(#b4d0f0,#9bbfe6 60%,#8db4e0)"></div>
<div class="t" style="left:57.60px;top:479.14px;font-size:10.5px;color:#2a3648;transform:scaleX(0.835);transform-origin:0 0;">Variable View</div>
<div class="a" style="left:354px;top:119px;width:361px;height:303px;background:#e4eefa;border:1px solid #adb5bf;box-shadow:1px 2px 6px rgba(0,0,0,0.22)"></div>
<div class="a" style="left:355px;top:120px;width:359px;height:21px;background:#fff"></div>
<div class="t" style="left:375.50px;top:125.68px;font-size:10px;color:#8c8c8c;transform:scaleX(0.8);transform-origin:0 0;">Crosstabs</div>
<svg class="a" style="left:360px;top:123.3px" width="14" height="14" viewBox="0 0 14 14">
<defs><radialGradient id="gl360" cx=".4" cy=".45" r=".6"><stop offset="0" stop-color="#e8f4fc"/><stop offset=".55" stop-color="#8fc0ea"/><stop offset="1" stop-color="#2f6ab8"/></radialGradient></defs>
<circle cx="6.3" cy="6.6" r="5.7" fill="url(#gl360)" stroke="#3570b8" stroke-width="1"/>
<path d="M0.6 3.6 L6.2 3.6 M3.4 0.8 L3.4 6.4" stroke="#e3142e" stroke-width="1.7"/>
<rect x="6.6" y="7.2" width="5.6" height="5.2" fill="#e84a5c"/>
<path d="M7 9 L12 9 M7 10.8 L12 10.8 M8.8 7.5 L8.8 12.4 M10.5 7.5 L10.5 12.4" stroke="#f7b0b8" stroke-width=".5"/>
</svg>
<svg class="a" style="left:699px;top:126px" width="10" height="10"><path d="M1 1L9 9M9 1L1 9" stroke="#7a7a7a" stroke-width="1"/></svg>
<div class="a" style="left:362px;top:160px;width:40px;height:187px;background:#fff;border:1px solid #3f80c8"></div>
<div class="a" style="left:560px;top:161px;width:83px;height:36px;background:#fff;border:1px solid #3f80c8"></div>
<div class="a" style="left:561px;top:163.5px;width:80px;height:11px;background:#b5b5b5"></div>
<div class="a" style="left:560px;top:215px;width:83px;height:35px;background:#fff;border:1px solid #3f80c8"></div>
<div class="a" style="left:561px;top:217.5px;width:80px;height:11px;background:#b5b5b5"></div>
<div class="a" style="left:560px;top:260px;width:86px;height:85px;border:1px solid #adc3da"></div>
<div class="btn" style="left:596px;top:274px;width:43px;height:17px;border-color:#a9c6e6;background:linear-gradient(#e2eefb,#cfe2f7)"></div>
<div class="t" style="left:592.50px;width:50px;text-align:center;top:277.44px;font-size:10.5px;color:#98a4b2;transform:scaleX(0.83);transform-origin:50% 0;"><span class="u">N</span>ext</div>
<div class="a" style="left:560px;top:298px;width:83px;height:40px;background:#fff;border:1px solid #3f80c8"></div>
<div class="t" style="left:548.60px;width:100px;text-align:right;top:350.74px;font-size:10.5px;color:#9aa4ae;transform:scaleX(0.83);transform-origin:100% 0;">s in table layers</div>
<div class="btn" style="left:655px;top:151.5px;width:52px;height:16.5px;"></div>
<div class="t" style="left:646.00px;width:70px;text-align:center;top:154.74px;font-size:10.5px;color:#111;transform:scaleX(0.83);transform-origin:50% 0;">E<span class="u">x</span>act...</div>
<div class="btn" style="left:655px;top:170px;width:52px;height:16.5px;background:linear-gradient(#e8f2fd,#cfe4fa);"></div>
<div class="t" style="left:646.00px;width:70px;text-align:center;top:173.24px;font-size:10.5px;color:#111;transform:scaleX(0.83);transform-origin:50% 0;"><span class="u">S</span>tatistics...</div>
<div class="btn" style="left:655px;top:188px;width:52px;height:16.5px;"></div>
<div class="t" style="left:646.00px;width:70px;text-align:center;top:191.24px;font-size:10.5px;color:#111;transform:scaleX(0.83);transform-origin:50% 0;">C<span class="u">e</span>lls...</div>
<div class="btn" style="left:655px;top:206.3px;width:52px;height:16.5px;"></div>
<div class="t" style="left:646.00px;width:70px;text-align:center;top:209.54px;font-size:10.5px;color:#111;transform:scaleX(0.83);transform-origin:50% 0;"><span class="u">F</span>ormat...</div>
<div class="btn" style="left:655px;top:225px;width:52px;height:16.5px;"></div>
<div class="t" style="left:646.00px;width:70px;text-align:center;top:228.24px;font-size:10.5px;color:#111;transform:scaleX(0.83);transform-origin:50% 0;">St<span class="u">y</span>le...</div>
<div class="btn" style="left:655px;top:243.5px;width:52px;height:16.5px;"></div>
<div class="t" style="left:646.00px;width:70px;text-align:center;top:246.74px;font-size:10.5px;color:#111;transform:scaleX(0.83);transform-origin:50% 0;">Bootstra<span class="u">p</span>...</div>
<div class="cb" style="left:364px;top:365px"></div>
<div class="cb" style="left:364px;top:381.5px"></div>
<div class="btn" style="left:439px;top:398.3px;width:36px;height:16.5px;border:1px solid #3a4450;box-shadow:inset 0 0 0 1px #9cc6f2;"></div>
<div class="t" style="left:427.00px;width:60px;text-align:center;top:401.74px;font-size:10.5px;color:#111;transform:scaleX(0.83);transform-origin:50% 0;">OK</div>
<div class="btn" style="left:477px;top:398.3px;width:36px;height:16.5px;"></div>
<div class="t" style="left:465.00px;width:60px;text-align:center;top:401.74px;font-size:10.5px;color:#111;transform:scaleX(0.83);transform-origin:50% 0;"><span class="u">P</span>aste</div>
<div class="btn" style="left:516px;top:398.3px;width:37px;height:16.5px;"></div>
<div class="t" style="left:504.50px;width:60px;text-align:center;top:401.74px;font-size:10.5px;color:#111;transform:scaleX(0.83);transform-origin:50% 0;"><span class="u">R</span>eset</div>
<div class="btn" style="left:555px;top:398.3px;width:36px;height:16.5px;"></div>
<div class="t" style="left:543.00px;width:60px;text-align:center;top:401.74px;font-size:10.5px;color:#111;transform:scaleX(0.83);transform-origin:50% 0;">Cancel</div>
<div class="btn" style="left:594px;top:398.3px;width:36px;height:16.5px;"></div>
<div class="t" style="left:582.00px;width:60px;text-align:center;top:401.74px;font-size:10.5px;color:#111;transform:scaleX(0.83);transform-origin:50% 0;">Help</div>
<div class="a" style="left:374px;top:137px;width:218px;height:253px;background:#e3eef9;border:1px solid #3d8ad6;box-shadow:0 3px 12px rgba(0,0,0,0.32)"></div>
<div class="a" style="left:374px;top:137px;width:218px;height:22px;background:#0078d7"></div>
<svg class="a" style="left:379.5px;top:141px" width="14" height="14" viewBox="0 0 14 14">
<defs><radialGradient id="gl379" cx=".4" cy=".45" r=".6"><stop offset="0" stop-color="#e8f4fc"/><stop offset=".55" stop-color="#8fc0ea"/><stop offset="1" stop-color="#2f6ab8"/></radialGradient></defs>
<circle cx="6.3" cy="6.6" r="5.7" fill="url(#gl379)" stroke="#3570b8" stroke-width="1"/>
<path d="M0.6 3.6 L6.2 3.6 M3.4 0.8 L3.4 6.4" stroke="#e3142e" stroke-width="1.7"/>
<rect x="6.6" y="7.2" width="5.6" height="5.2" fill="#e84a5c"/>
<path d="M7 9 L12 9 M7 10.8 L12 10.8 M8.8 7.5 L8.8 12.4 M10.5 7.5 L10.5 12.4" stroke="#f7b0b8" stroke-width=".5"/>
</svg>
<div class="t" style="left:395.80px;top:144.08px;font-size:10px;color:#fff;transform:scaleX(0.8);transform-origin:0 0;">Crosstabs: Statistics</div>
<svg class="a" style="left:576px;top:144px" width="10" height="9"><path d="M1 0.5L8.5 8M8.5 0.5L1 8" stroke="#fff" stroke-width="1.1"/></svg>
<div class="cb" style="left:384px;top:169.7px"></div>
<div class="a" style="left:395.5px;top:167px;width:104.5px;height:14px;border:1px solid #8a8a8a;border-right-color:#c0c0c0;border-bottom-color:#c0c0c0"></div>
<div class="t" style="left:396.60px;top:168.74px;font-size:10.5px;color:#1a1a1a;transform:scaleX(0.83);transform-origin:0 0;">C<span class="u">h</span>i-square</div>
<div class="cb" style="left:503.5px;top:170px"></div>
<div class="t" style="left:516.00px;top:168.74px;font-size:10.5px;color:#1a1a1a;transform:scaleX(0.83);transform-origin:0 0;">Co<span class="u">r</span>relations</div>
<div class="grp" style="left:383px;top:193.2px;width:110.5px;height:73.8px"></div>
<div class="a" style="left:386px;top:191.2px;width:33px;height:4px;background:#e3eef9"></div>
<div class="t" style="left:387.50px;top:188.44px;font-size:10.5px;color:#4040a8;transform:scaleX(0.83);transform-origin:0 0;">Nominal</div>
<div class="grp" style="left:503.5px;top:193.2px;width:78.5px;height:73.8px"></div>
<div class="a" style="left:506.5px;top:191.2px;width:31px;height:4px;background:#e3eef9"></div>
<div class="t" style="left:508.00px;top:188.44px;font-size:10.5px;color:#4040a8;transform:scaleX(0.83);transform-origin:0 0;">Ordinal</div>
<div class="grp" style="left:383px;top:281.5px;width:110.5px;height:38px"></div>
<div class="a" style="left:386px;top:279.5px;width:76px;height:4px;background:#e3eef9"></div>
<div class="t" style="left:387.50px;top:276.74px;font-size:10.5px;color:#4040a8;transform:scaleX(0.83);transform-origin:0 0;">Nominal by Interval</div>
<div class="cb" style="left:388.5px;top:207.1px"></div>
<div class="t" style="left:401.00px;top:206.34px;font-size:10.5px;color:#1a1a1a;transform:scaleX(0.83);transform-origin:0 0;">C<span class="u">o</span>ntingency coefficient</div>
<div class="cb" style="left:508px;top:207.1px"></div>
<div class="t" style="left:520.50px;top:206.34px;font-size:10.5px;color:#1a1a1a;transform:scaleX(0.83);transform-origin:0 0;"><span class="u">G</span>amma</div>
<div class="cb" style="left:388.5px;top:222.4px"></div>
<div class="t" style="left:401.00px;top:221.64px;font-size:10.5px;color:#1a1a1a;transform:scaleX(0.83);transform-origin:0 0;"><span class="u">P</span>hi and Cramer's V</div>
<div class="cb" style="left:508px;top:222.4px"></div>
<div class="t" style="left:520.50px;top:221.64px;font-size:10.5px;color:#1a1a1a;transform:scaleX(0.83);transform-origin:0 0;"><span class="u">S</span>omers' d</div>
<div class="cb" style="left:388.5px;top:237.7px"></div>
<div class="t" style="left:401.00px;top:236.94px;font-size:10.5px;color:#1a1a1a;transform:scaleX(0.83);transform-origin:0 0;"><span class="u">L</span>ambda</div>
<div class="cb" style="left:508px;top:237.7px"></div>
<div class="t" style="left:520.50px;top:236.94px;font-size:10.5px;color:#1a1a1a;transform:scaleX(0.83);transform-origin:0 0;">Kendall's tau-<span class="u">b</span></div>
<div class="cb" style="left:388.5px;top:253.2px"></div>
<div class="t" style="left:401.00px;top:252.44px;font-size:10.5px;color:#1a1a1a;transform:scaleX(0.83);transform-origin:0 0;"><span class="u">U</span>ncertainty coefficient</div>
<div class="cb" style="left:508px;top:253.2px"></div>
<div class="t" style="left:520.50px;top:252.44px;font-size:10.5px;color:#1a1a1a;transform:scaleX(0.83);transform-origin:0 0;">Kendall's tau-<span class="u">c</span></div>
<div class="cb" style="left:388.5px;top:294.5px"></div>
<div class="t" style="left:401.00px;top:293.74px;font-size:10.5px;color:#1a1a1a;transform:scaleX(0.83);transform-origin:0 0;"><span class="u">E</span>ta</div>
<div class="cb" style="left:503.5px;top:278.9px"></div>
<div class="t" style="left:516.00px;top:278.14px;font-size:10.5px;color:#1a1a1a;transform:scaleX(0.83);transform-origin:0 0;"><span class='u'>K</span>appa</div>
<div class="cb" style="left:503.5px;top:294.5px"></div>
<div class="t" style="left:516.00px;top:293.74px;font-size:10.5px;color:#1a1a1a;transform:scaleX(0.83);transform-origin:0 0;">R<span class='u'>i</span>sk</div>
<div class="cb" style="left:503.5px;top:310.1px"></div>
<div class="t" style="left:516.00px;top:309.34px;font-size:10.5px;color:#1a1a1a;transform:scaleX(0.83);transform-origin:0 0;"><span class='u'>M</span>cNemar</div>
<div class="cb" style="left:385px;top:332px"></div>
<div class="t" style="left:396.80px;top:330.94px;font-size:10.5px;color:#1a1a1a;transform:scaleX(0.83);transform-origin:0 0;">Cochr<span class="u">a</span>n's and Mantel-Haenszel statistics</div>
<div class="t" style="left:398.00px;top:345.34px;font-size:10.5px;color:#a5adb7;transform:scaleX(0.83);transform-origin:0 0;"><span class="u">T</span>est common odds ratio equals:</div>
<div class="a" style="left:530px;top:343.7px;width:35px;height:15px;border:1px solid #c6cdd5;background:#e6edf5"></div>
<div class="t" style="left:534.00px;top:346.24px;font-size:10.5px;color:#a5adb7;transform:scaleX(0.83);transform-origin:0 0;">1</div>
<div class="btn" style="left:414px;top:365.5px;width:44px;height:17.5px;border:1px solid #3a4450;box-shadow:inset 0 0 0 1px #9cc6f2;"></div>
<div class="t" style="left:406.00px;width:60px;text-align:center;top:369.14px;font-size:10.5px;color:#111;transform:scaleX(0.83);transform-origin:50% 0;">Continue</div>
<div class="btn" style="left:461px;top:365.5px;width:44px;height:17.5px;"></div>
<div class="t" style="left:453.00px;width:60px;text-align:center;top:369.14px;font-size:10.5px;color:#111;transform:scaleX(0.83);transform-origin:50% 0;">Cancel</div>
<div class="btn" style="left:508px;top:365.5px;width:43.5px;height:17.5px;"></div>
<div class="t" style="left:499.75px;width:60px;text-align:center;top:369.14px;font-size:10.5px;color:#111;transform:scaleX(0.83);transform-origin:50% 0;">Help</div>
<svg class="a" style="left:330px;top:150px" width="90" height="45" viewBox="330 150 90 45">
<g fill="none" stroke="#f0202a" stroke-linecap="round" stroke-linejoin="round">
<path d="M381 164.5 Q383 162 386 161.8 L401 161.5 Q404 161.5 404.2 164 L404.5 180 Q404.5 185.5 402 186.2 L386 186.5 Q383 186.5 381.5 184.8 Q378 184 377.5 181 L377.5 169 Q377.8 165.5 381 164.5" stroke-width="2.8"/>
<path d="M383.8 158 Q380 161.5 379.6 165.5" stroke-width="1.9"/>
<path d="M380.2 166.2 Q383 165.6 385.6 167" stroke-width="1.2"/>
<path d="M337.4 158.2 L337.4 165.3 L345.5 165.3" stroke-width="1.45"/>
<path d="M344.6 158.2 L340.7 161.2 L344.9 164.3" stroke-width="1.45"/>
<path d="M357 162.5 Q356.6 168 351 169" stroke-width="1.45"/>
<path d="M357.8 158 L357.8 165.4 L375 165.4" stroke-width="1.45"/>
<path d="M363.2 163 L363.2 165.4 M366.5 163 L366.5 165.4 M369.8 162.4 Q374 162.5 375 165" stroke-width="1.2"/>
<path d="M377 158.5 L377 165.5" stroke-width="1.45"/>
<path d="M364.6 159.5 L365.4 159.5 M368.2 159 L369 159 M371.3 159.6 L372.1 159.6" stroke-width="1.45"/>
</g></svg>
</body></html>
